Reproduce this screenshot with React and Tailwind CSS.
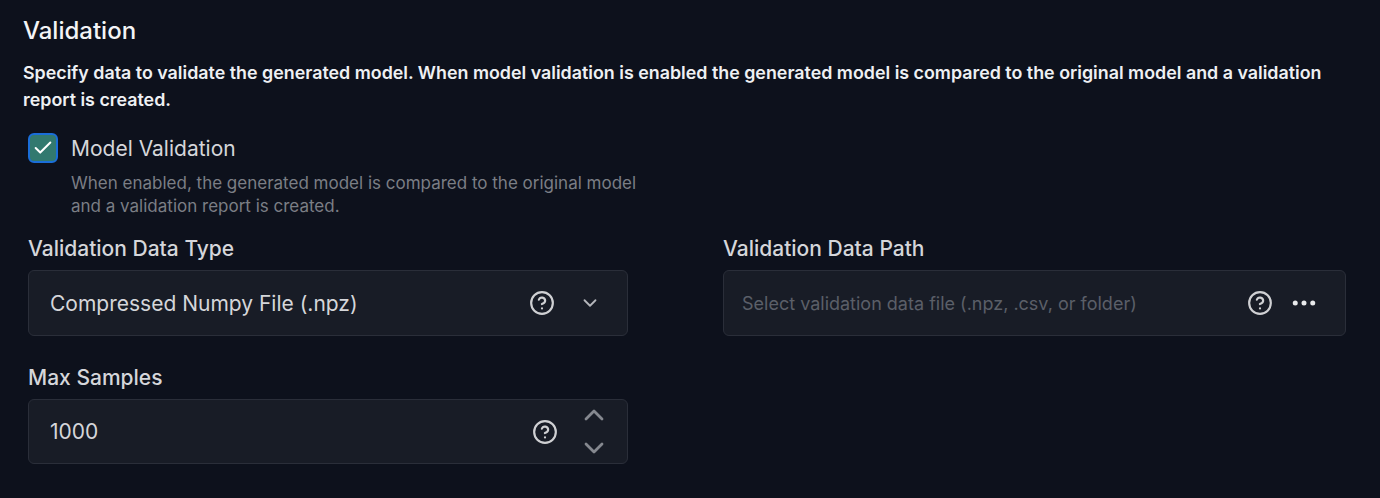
import { Check, ChevronDown, ChevronUp, CircleHelp, Ellipsis } from "lucide-react";

function Help() {
    return <CircleHelp className="w-[26px] h-[26px] text-[#cfd0d3]" strokeWidth={2} />;
}

function Field({ label, width, children }) {
    return (
        <div className={`flex flex-col ${width}`}>
            <label className="pt-[1px] h-[28px] text-[21px] leading-[28px] font-medium text-[#d5d6da] mb-[8px]">{label}</label>
            {children}
        </div>
    );
}

export default function App() {
    return (
        <div className="w-[1380px] h-[498px] bg-[#0d111c] overflow-hidden pt-[16px] pl-[23px] font-['Inter',sans-serif]">
            <h2 className="text-[24px] leading-[30px] font-medium text-[#f3f4f6]">Validation</h2>

            <p className="mt-[13px] w-[1320px] text-[17.85px] leading-[27px] font-semibold text-[#eef0f3]">
                Specify data to validate the generated model. When model validation is enabled the generated model is
                compared to the original model and a validation report is created.
            </p>

            <div className="pl-[5px]">
                {/* Model validation checkbox */}
                <div className="flex mt-[20px]">
                    <div className="flex items-center justify-center w-[30px] h-[30px] rounded-[6px] border-2 border-[#1a6ed8] bg-[#32796f]">
                        <Check className="w-[22px] h-[22px] text-white" strokeWidth={2.2} />
                    </div>
                    <div className="ml-[13px]">
                        <div className="text-[21px] leading-[31px] text-[#d5d6da]">Model Validation</div>
                        <div className="mt-[8px] w-[575px] text-[17px] leading-[23px] text-[#7b7e85]">
                            When enabled, the generated model is compared to the original model and a validation report
                            is created.
                        </div>
                    </div>
                </div>

                <div className="flex gap-[95px] mt-[16px]">
                    <Field label="Validation Data Type" width="w-[600px]">
                        <div className="flex items-center h-[66px] pl-[21px] pr-[26px] rounded-[6px] border border-[#2a2e39] bg-[#181c26]">
                            <span className="grow pt-[1px] text-[21px] text-[#d5d6da]">Compressed Numpy File (.npz)</span>
                            <Help />
                            <ChevronDown className="ml-[24px] w-[22px] h-[22px] text-[#b4b6bb]" strokeWidth={2} />
                        </div>
                    </Field>

                    <Field label="Validation Data Path" width="w-[623px]">
                        <div className="flex items-center h-[66px] pl-[18px] pr-[26px] rounded-[6px] border border-[#2a2e39] bg-[#181c26]">
                            <span className="grow pt-[1px] text-[18px] text-[#5b5f68]">
                                Select validation data file (.npz, .csv, or folder)
                            </span>
                            <Help />
                            <Ellipsis className="ml-[16px] w-[30px] h-[30px] text-[#e8e9eb]" strokeWidth={2} />
                        </div>
                    </Field>
                </div>

                <div className="mt-[27px]">
                    <Field label="Max Samples" width="w-[600px]">
                        <div className="flex items-center h-[65px] pl-[21px] pr-[17px] rounded-[6px] border border-[#2a2e39] bg-[#181c26]">
                            <span className="grow text-[21px] text-[#d5d6da]">1000</span>
                            <Help />
                            <div className="flex flex-col ml-[20px] gap-[1px] -mt-[1px]">
                                <ChevronUp className="w-[32px] h-[32px] text-[#85888f]" strokeWidth={2.1} />
                                <ChevronDown className="w-[32px] h-[32px] text-[#85888f]" strokeWidth={2.1} />
                            </div>
                        </div>
                    </Field>
                </div>
            </div>
        </div>
    );
}
